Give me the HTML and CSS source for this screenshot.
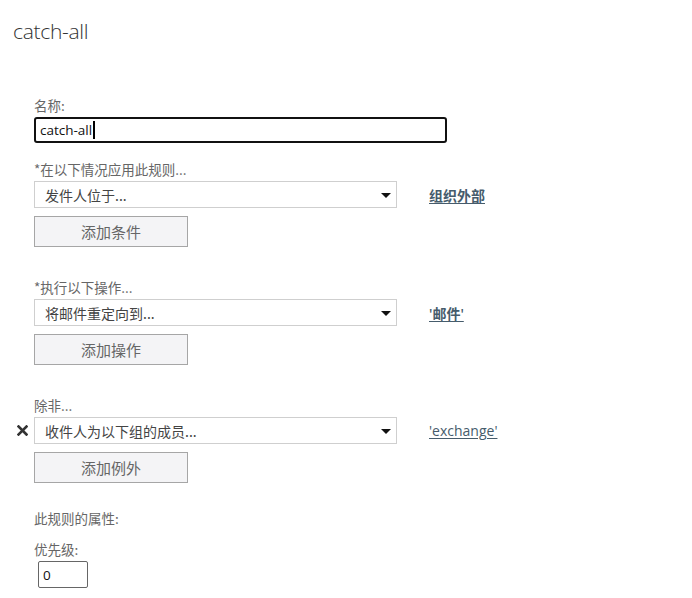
FILE: index.html
```html
<!DOCTYPE html>
<html lang="zh-CN">
<head>
<meta charset="utf-8">
<title>catch-all</title>
<link rel="stylesheet" href="styles.css">
</head>
<body>
<div class="page">
  <h1 class="title">catch-all</h1>
  <div class="form">
    <div class="field">
      <div class="label">名称:</div>
      <div class="name-input"><span>catch-all</span><span class="caret"></span></div>
    </div>

    <div class="section first">
      <div class="label">*在以下情况应用此规则...</div>
      <div class="row">
        <span class="remove"></span>
        <div class="select"><span>发件人位于...</span><span class="arrow"></span></div>
        <a class="link bold">组织外部</a>
      </div>
      <div class="btn">添加条件</div>
    </div>

    <div class="section">
      <div class="label">*执行以下操作...</div>
      <div class="row">
        <span class="remove"></span>
        <div class="select"><span>将邮件重定向到...</span><span class="arrow"></span></div>
        <a class="link bold">'邮件'</a>
      </div>
      <div class="btn">添加操作</div>
    </div>

    <div class="section">
      <div class="label">除非...</div>
      <div class="row">
        <span class="remove"><svg width="11" height="11" viewBox="0 0 11 11"><path d="M1.5 1.5 L9.5 9.5 M9.5 1.5 L1.5 9.5" stroke="#333" stroke-width="2.6" stroke-linecap="square"/></svg></span>
        <div class="select"><span>收件人为以下组的成员...</span><span class="arrow"></span></div>
        <a class="link">'exchange'</a>
      </div>
      <div class="btn">添加例外</div>
    </div>

    <div class="props">
      <div class="label">此规则的属性:</div>
      <div class="label prio">优先级:</div>
      <div class="num-input">0</div>
    </div>
  </div>
</div>
</body>
</html>
```

FILE: styles.css
```css
html, body {
  margin: 0;
  padding: 0;
  background: #ffffff;
}
body {
  font-family: "Segoe UI", "Open Sans", "Noto Sans CJK SC", sans-serif;
  color: #444;
}
.page {
  padding: 17px 0 0 13px;
}
.title {
  margin: 0;
  font-family: "Open Sans", "Noto Sans CJK SC", sans-serif;
  font-weight: 300;
  font-size: 21px;
  line-height: 28px;
  color: #333;
  letter-spacing: -0.3px;
}
.form {
  padding: 50px 0 0 21px;
}
.label {
  font-family: "Noto Sans CJK SC", sans-serif;
  font-size: 13.5px;
  line-height: 20px;
  margin-bottom: 2px;
  color: #666;
}
.name-input {
  box-sizing: border-box;
  width: 413px;
  height: 26px;
  border: 2px solid #111;
  border-radius: 3px;
  display: flex;
  align-items: center;
  padding-left: 4px;
  font-family: "Open Sans", sans-serif;
  font-size: 13.5px;
  color: #111;
}
.caret {
  display: inline-block;
  width: 2px;
  height: 18px;
  background: #000;
  margin-left: 1px;
}
.section {
  margin-top: 30px;
}
.section.first {
  margin-top: 16px;
}
.row {
  display: flex;
  align-items: center;
  margin-left: -21px;
}
.remove {
  width: 21px;
  display: flex;
  align-items: center;
}
.remove svg {
  margin-left: 4px;
}
.select {
  width: 363px;
  height: 27px;
  box-sizing: border-box;
  border: 1px solid #cfcfcf;
  display: flex;
  align-items: center;
  justify-content: space-between;
  padding: 0 5px 0 10px;
  font-family: "Noto Sans CJK SC", sans-serif;
  font-size: 14px;
  color: #444;
}
.arrow {
  width: 0;
  height: 0;
  border-left: 5px solid transparent;
  border-right: 5px solid transparent;
  border-top: 5px solid #111;
  margin-top: 2px;
}
.link {
  margin-left: 32px;
  font-family: "Open Sans", "Noto Sans CJK SC", sans-serif;
  font-size: 14px;
  color: #465c6c;
  text-decoration: underline;
  text-underline-offset: 2px;
}
.link.bold {
  font-weight: 600;
}
.btn {
  margin-top: 8px;
  width: 154px;
  height: 31px;
  box-sizing: border-box;
  border: 1px solid #a6a6a6;
  background: #f4f4f6;
  display: flex;
  align-items: center;
  justify-content: center;
  font-family: "Noto Sans CJK SC", sans-serif;
  font-size: 15px;
  color: #666;
}
.props {
  margin-top: 25px;
}
.prio {
  margin-top: 11px;
}
.num-input {
  margin-top: 1px;
  margin-left: 4px;
  width: 50px;
  height: 27px;
  box-sizing: border-box;
  border: 1px solid #666;
  border-radius: 2px;
  padding-left: 4px;
  display: flex;
  align-items: center;
  font-family: "Open Sans", sans-serif;
  font-size: 13.5px;
  color: #111;
}
```
